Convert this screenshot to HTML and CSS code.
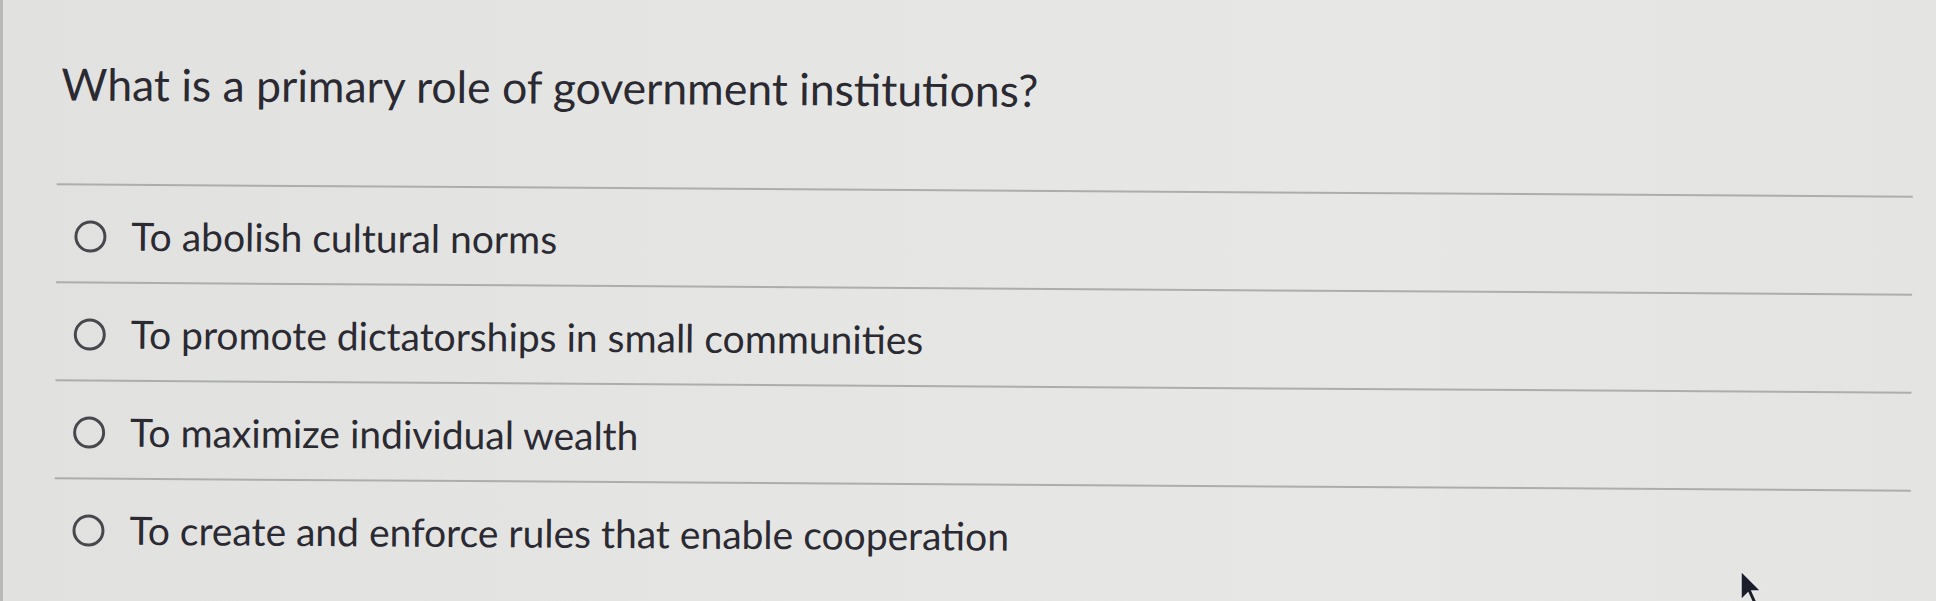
FILE: index.html
```html
<!DOCTYPE html>
<html lang="en">
<head>
<meta charset="utf-8">
<title>Quiz question</title>
<link rel="stylesheet" href="styles.css">
</head>
<body>
<div class="screen">
  <div class="card">
    <h1 class="question">What is a primary role of government institutions?</h1>
    <ul class="answers">
      <li class="option"><span class="radio"></span><span class="label">To abolish cultural norms</span></li>
      <li class="option"><span class="radio"></span><span class="label">To promote dictatorships in small communities</span></li>
      <li class="option"><span class="radio"></span><span class="label">To maximize individual wealth</span></li>
      <li class="option last"><span class="radio"></span><span class="label">To create and enforce rules that enable cooperation</span></li>
    </ul>
  </div>
  <svg class="cursor" width="26" height="36" viewBox="0 0 26 36" aria-hidden="true">
    <path d="M2 1 L2 30 L9 23 L14 34 L18 32 L13 21 L22 21 Z" fill="#1b1d2a" stroke="#e8e8ea" stroke-width="1.5"/>
  </svg>
</div>
</body>
</html>
```

FILE: styles.css
```css
html, body {
  margin: 0;
  padding: 0;
  height: 100%;
  overflow: hidden;
}

body {
  background: #e3e4e2;
  font-family: Lato, "Open Sans", "Liberation Sans", sans-serif;
  color: #2b2a32;
}

.screen {
  position: relative;
  height: 601px;
  border-left: 3px solid #b9bab8;
  background: linear-gradient(90deg, #e1e2e0 0%, #e5e6e4 40%, #e7e8e6 70%, #e4e5e3 100%);
  box-sizing: border-box;
}

.card {
  padding: 56px 22px 0 55px;
  transform: rotate(0.38deg);
  transform-origin: 0 0;
}

.question {
  margin: 0 0 74px 4px;
  font-size: 44.5px;
  font-weight: 400;
  line-height: 1.2;
  color: #2b2a32;
}

.answers {
  list-style: none;
  margin: 0;
  padding: 0;
  border-top: 2px solid #acaeac;
}

.option {
  display: flex;
  align-items: center;
  height: 96px;
  border-bottom: 2px solid #acaeac;
}

.option.last {
  border-bottom: none;
}

.radio {
  flex: none;
  width: 26px;
  height: 26px;
  margin: 6px 25px 0 18px;
  border: 3px solid #48474e;
  border-radius: 50%;
  box-sizing: content-box;
}

.label {
  font-size: 39px;
  line-height: 1.2;
  color: #2b2a32;
  margin-top: 4px;
}

.cursor {
  position: absolute;
  left: 1736px;
  top: 570px;
}
```
